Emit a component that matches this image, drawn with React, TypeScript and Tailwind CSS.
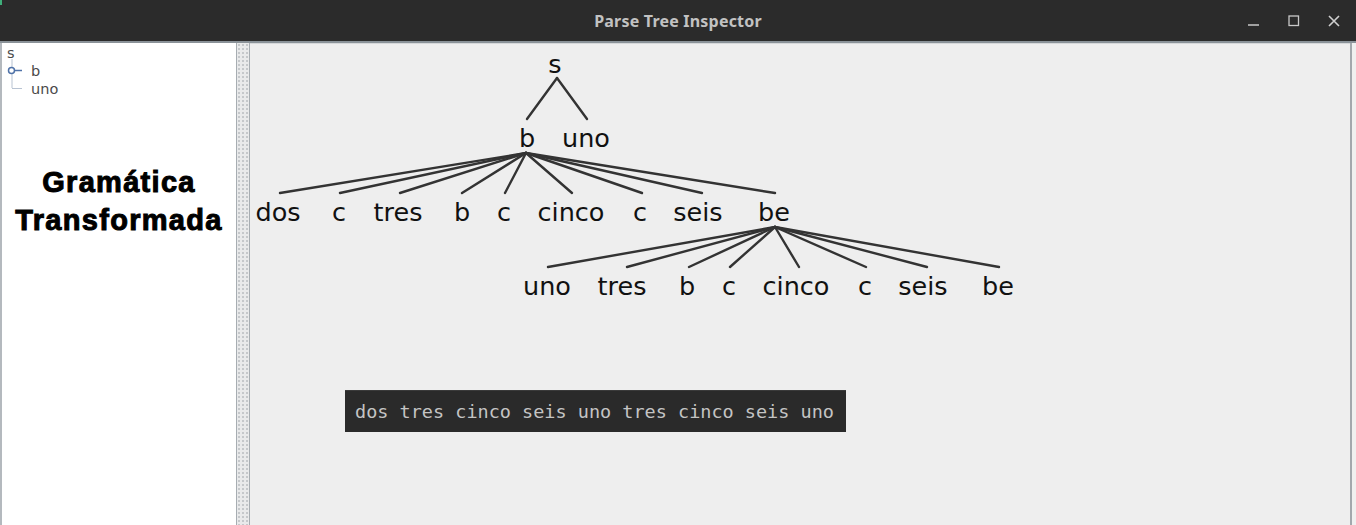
import React from 'react';

const row2 = [
  { t: 'dos', x: 279, lx: 281 },
  { t: 'c', x: 340, lx: 341 },
  { t: 'tres', x: 399, lx: 401 },
  { t: 'b', x: 463, lx: 463 },
  { t: 'c', x: 505, lx: 506 },
  { t: 'cinco', x: 572, lx: 573 },
  { t: 'c', x: 641, lx: 643 },
  { t: 'seis', x: 699, lx: 703 },
  { t: 'be', x: 775, lx: 776 },
];

const row3 = [
  { t: 'uno', x: 548, lx: 549 },
  { t: 'tres', x: 623, lx: 628 },
  { t: 'b', x: 688, lx: 690 },
  { t: 'c', x: 730, lx: 731 },
  { t: 'cinco', x: 797, lx: 800 },
  { t: 'c', x: 866, lx: 867 },
  { t: 'seis', x: 924, lx: 928 },
  { t: 'be', x: 999, lx: 1000 },
];

const TitleBar = () => (
  <div className="relative flex h-[41px] shrink-0 items-center justify-center bg-[#2b2b2b]">
    <div className="absolute left-0 top-0 h-[5px] w-[2px] bg-[#3fae7a]" />
    <span className="font-['Noto_Sans',sans-serif] text-[16px] font-bold tracking-[0.2px] text-[#c2c2c2]">
      Parse Tree Inspector
    </span>
    <div className="absolute right-0 top-0 flex h-full items-center">
      <svg width="14" height="14" viewBox="0 0 14 14" className="mr-[26px]">
        <line x1="1" y1="11" x2="12" y2="11" stroke="#c8c8c8" strokeWidth="1.5" />
      </svg>
      <svg width="14" height="14" viewBox="0 0 14 14" className="mr-[26px]">
        <rect x="2" y="2" width="9.5" height="9.5" fill="none" stroke="#c8c8c8" strokeWidth="1.3" />
      </svg>
      <svg width="14" height="14" viewBox="0 0 14 14" className="mr-[15px]">
        <path d="M2 2 L12 12 M12 2 L2 12" stroke="#cfcfcf" strokeWidth="1.6" />
      </svg>
    </div>
  </div>
);

const SideTree = () => (
  <div className="relative flex w-[236px] shrink-0 flex-col border-l-2 border-[#b4b9be] bg-white">
    <svg width="30" height="60" className="absolute left-0 top-0">
      <line x1="10" y1="16" x2="10" y2="45" stroke="#b8c3d2" strokeWidth="1" />
      <line x1="10" y1="45.5" x2="20" y2="45.5" stroke="#b8c3d2" strokeWidth="1" />
      <line x1="12" y1="27.5" x2="20" y2="27.5" stroke="#4f72a8" strokeWidth="1.5" />
      <circle cx="9.5" cy="27.5" r="3" fill="white" stroke="#4f72a8" strokeWidth="1.5" />
    </svg>
    <div className="pl-[5px] pt-[1px] font-['DejaVu_Sans',sans-serif] text-[14.5px] leading-[18px] text-[#4a4a4a]">
      <div>s</div>
      <div className="pl-[24px]">b</div>
      <div className="pl-[24px]">uno</div>
    </div>
    <div className="mt-[65px] text-center font-['Liberation_Sans',sans-serif] text-[29px] font-black leading-[38px] tracking-[1.3px] text-black [-webkit-text-stroke:1px_black]">
      <div>Gramática</div>
      <div>Transformada</div>
    </div>
  </div>
);

const Splitter = () => (
  <div className="w-[14px] shrink-0 border-x border-[#a7adb2] bg-[#e9eaeb] bg-[radial-gradient(#c5c8cb_1px,transparent_1px)] bg-[length:4px_4px]" />
);

const Canvas = () => (
  <div className="relative flex-1 border-t border-[#d6d8da] bg-[#eeeeee]">
    <svg
      width="1101"
      height="481"
      viewBox="251 44 1101 481"
      className="absolute left-0 top-0"
      fontFamily="DejaVu Sans, sans-serif"
      fontSize="25.5"
      fill="#111"
    >
      <g stroke="#333" strokeWidth="2.4" strokeLinecap="round">
        <line x1="558" y1="78" x2="528" y2="119" />
        <line x1="558" y1="78" x2="588" y2="119" />
        {row2.map((n, i) => (
          <line key={'a' + i} x1="527" y1="153" x2={n.lx} y2="193" />
        ))}
        {row3.map((n, i) => (
          <line key={'b' + i} x1="776" y1="227" x2={n.lx} y2="267" />
        ))}
      </g>
      <g textAnchor="middle">
        <text x="556" y="73">s</text>
        <text x="528" y="147">b</text>
        <text x="587" y="147">uno</text>
        {row2.map((n, i) => (
          <text key={'c' + i} x={n.x} y="221">{n.t}</text>
        ))}
        {row3.map((n, i) => (
          <text key={'d' + i} x={n.x} y="295">{n.t}</text>
        ))}
      </g>
    </svg>
    <div className="absolute left-[95px] top-[346px] flex h-[42px] w-[501px] items-center border-t border-[#3a3a3a] bg-[#2a2a2a] pl-[10px] font-['DejaVu_Sans_Mono',monospace] text-[18.5px] text-[#c4c4c4]">
      dos tres cinco seis uno tres cinco seis uno
    </div>
  </div>
);

export default function App() {
  return (
    <div className="flex h-[525px] w-[1356px] flex-col overflow-hidden bg-[#f0f0f0]">
      <TitleBar />
      <div className="flex flex-1 border-t-2 border-[#8a9298] pr-[4px]">
        <SideTree />
        <Splitter />
        <div className="flex flex-1 border-r-2 border-[#a3a8ad]">
          <Canvas />
        </div>
      </div>
    </div>
  );
}
